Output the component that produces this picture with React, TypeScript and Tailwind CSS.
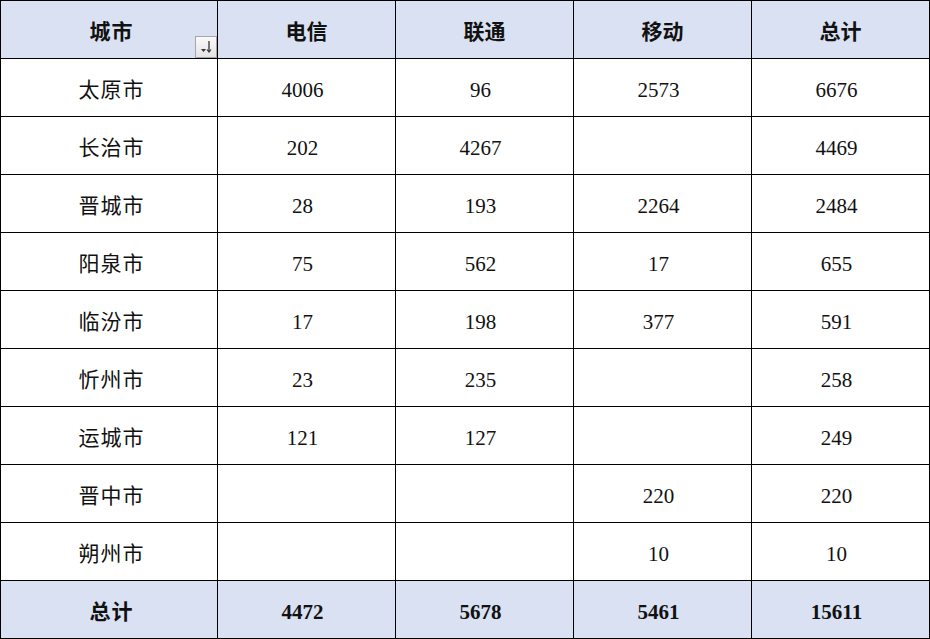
const header = ['城市', '电信', '联通', '移动', '总计'];

const rows: string[][] = [
  ['太原市', '4006', '96', '2573', '6676'],
  ['长治市', '202', '4267', '', '4469'],
  ['晋城市', '28', '193', '2264', '2484'],
  ['阳泉市', '75', '562', '17', '655'],
  ['临汾市', '17', '198', '377', '591'],
  ['忻州市', '23', '235', '', '258'],
  ['运城市', '121', '127', '', '249'],
  ['晋中市', '', '', '220', '220'],
  ['朔州市', '', '', '10', '10'],
];

const total = ['总计', '4472', '5678', '5461', '15611'];

const font = "font-['Liberation_Serif','Noto_Sans_CJK_SC',serif]";

function FilterButton() {
  return (
    <div className="absolute right-0 bottom-0 w-[22px] h-[22px] border border-[#a6a6a6] bg-gradient-to-b from-[#fafafa] to-[#e4e4e4] flex items-end justify-center pb-[3px]">
      <svg width="14" height="14" viewBox="0 0 14 14">
        <path d="M2 9 L7 9 L4.5 12 Z" fill="#333" />
        <path d="M10 1 L10 12" stroke="#333" strokeWidth="1.3" />
        <path d="M8 9.5 L10 12 L12 9.5" stroke="#333" strokeWidth="1.2" fill="none" />
      </svg>
    </div>
  );
}

function Row({ cells, bold, shaded, filter }: { cells: string[]; bold?: boolean; shaded?: boolean; filter?: boolean }) {
  return (
    <>
      {cells.map((c, i) => {
        const numeric = /^\d+$/.test(c);
        return (
          <div
            key={i}
            className={`relative h-[58px] pt-[6px] border-r border-b border-black flex items-center justify-center text-[21px] text-[#111] ${
              shaded ? 'bg-[#d9e1f2]' : 'bg-white'
            } ${bold ? 'font-bold' : 'font-normal'} ${numeric ? 'pr-[8px]' : ''} ${i === 0 ? 'pl-[5px]' : ''}`}
          >
            <span className={i === 0 ? 'tracking-[1px]' : ''}>{c}</span>
            {filter && i === 0 && <FilterButton />}
          </div>
        );
      })}
    </>
  );
}

export default function App() {
  return (
    <div className="w-[930px] h-[639px] bg-white overflow-hidden">
      <div className={`grid grid-cols-[217px_178px_178px_178px_178px] border-l border-t border-black ${font}`}>
        <Row cells={header} bold shaded filter />
        {rows.map((r, i) => (
          <Row key={i} cells={r} />
        ))}
        <Row cells={total} bold shaded />
      </div>
    </div>
  );
}
